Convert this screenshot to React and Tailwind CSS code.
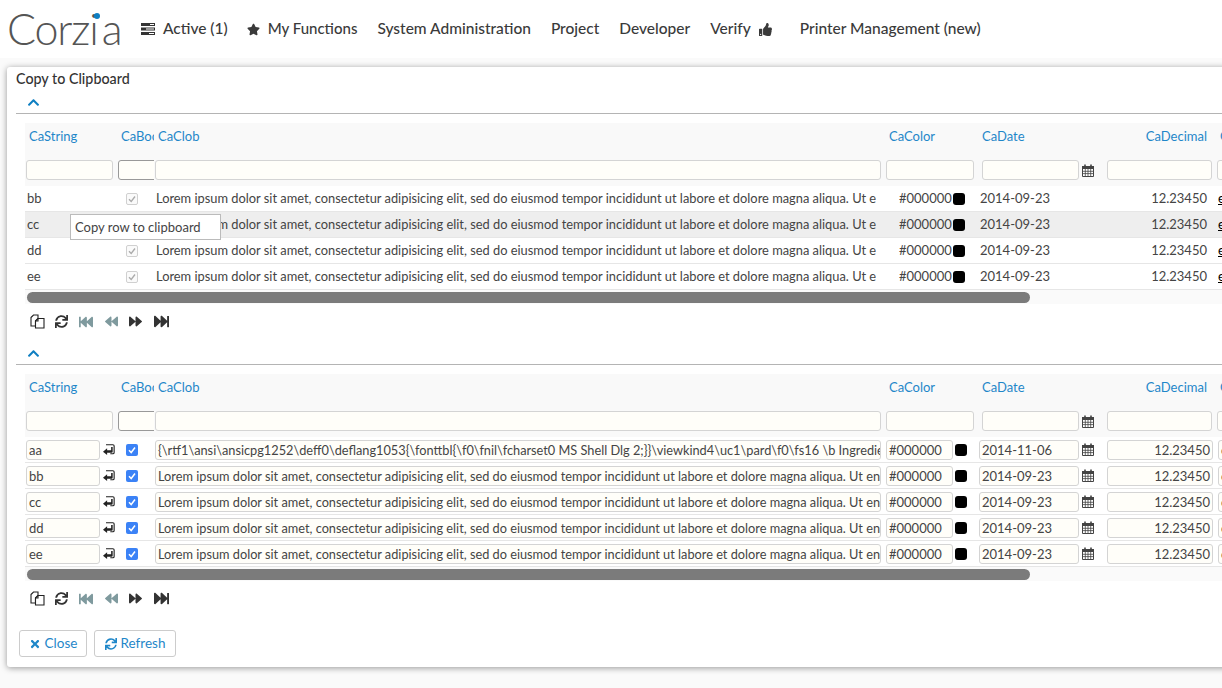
import {
    FaStar, FaThumbsUp, FaTimes, FaSync, FaFastBackward, FaFastForward, FaBackward, FaForward, FaChevronUp,
} from "react-icons/fa";

const LOREM = "Lorem ipsum dolor sit amet, consectetur adipisicing elit, sed do eiusmod tempor incididunt ut labore et dolore magna aliqua. Ut enim ad";
const RTF = "{\\rtf1\\ansi\\ansicpg1252\\deff0\\deflang1053{\\fonttbl{\\f0\\fnil\\fcharset0 MS Shell Dlg 2;}}\\viewkind4\\uc1\\pard\\f0\\fs16 \\b Ingredients";
const COLS = "grid grid-cols-[90px_39px_730px_95px_125px_111px_60px]";
const INPUT = "h-[20px] bg-[#fffef9] border border-[#d4d4d4] rounded-[3px] text-[13px] text-[#444] leading-[18px] overflow-hidden whitespace-nowrap";

function TasksIcon() {
    return (
        <svg width="14" height="12" viewBox="0 0 14 12" className="text-[#333]">
            <rect x="0" y="0" width="14" height="3" fill="currentColor" />
            <rect x="0" y="4.5" width="14" height="3" fill="currentColor" />
            <rect x="0" y="9" width="14" height="3" fill="currentColor" />
            <rect x="9" y="1" width="4" height="1" fill="#fff" />
            <rect x="5" y="5.5" width="8" height="1" fill="#fff" />
            <rect x="8" y="10" width="5" height="1" fill="#fff" />
        </svg>
    );
}

function CalendarIcon() {
    return (
        <svg width="12" height="13" viewBox="0 0 12 13" className="shrink-0 text-[#444]">
            <path d="M.5 2.5h11v10H.5z" fill="#fff" stroke="currentColor" />
            <path d="M0 2h12v3H0z" fill="currentColor" />
            <path d="M3 0.5v3M9 0.5v3" stroke="currentColor" strokeWidth="1.6" />
            <path d="M3.3 5v7M6 5v7M8.7 5v7M1 7.3h10M1 9.6h10" stroke="currentColor" strokeWidth=".8" />
        </svg>
    );
}

function CopyIcon() {
    return (
        <svg width="15" height="15" viewBox="0 0 15 15" fill="none" stroke="#222" strokeWidth="1.1">
            <path d="M1 3.5 3.500 1H8v3.500L5.500 7v5H1z" />
            <path d="M5.500 7 8 4.500h6V14H5.500z" fill="#fff" />
            <path d="M8 4.500V7H5.500" />
        </svg>
    );
}

function RowCopyIcon() {
    return (
        <svg width="14" height="13" viewBox="0 0 14 13" fill="none">
            <path d="M3.500 1h8a1.500 1.500 0 0 1 1.500 1.500v7.500a1.500 1.500 0 0 1-1.500 1.500H8.500" stroke="#222" strokeWidth="1.300" />
            <path d="M0 9 4.800 5v2.500h4.700V3.500h1.800V9a1.300 1.300 0 0 1-1.300 1.300H4.800V13z" fill="#222" />
        </svg>
    );
}

function Check({ disabled }) {
    return disabled ? (
        <span className="w-[12px] h-[12px] rounded-[2px] bg-[#fafafa] border border-[#d0d0d0] flex items-center justify-center">
            <svg width="8" height="8" viewBox="0 0 8 8"><path d="M1 4.200 3.200 6.500 7 1.500" fill="none" stroke="#aaa" strokeWidth="1.300" /></svg>
        </span>
    ) : (
        <span className="w-[12px] h-[12px] rounded-[2px] bg-[#3b82f6] flex items-center justify-center">
            <svg width="8" height="8" viewBox="0 0 8 8"><path d="M1 4.200 3.200 6.500 7 1.500" fill="none" stroke="#fff" strokeWidth="1.500" /></svg>
        </span>
    );
}

function Swatch() {
    return <span className="w-[12px] h-[12px] rounded-[3px] bg-black shrink-0" />;
}

function Chevron() {
    return (
        <div className="h-[21px] pl-[11px] pb-[2px] flex items-center border-b border-[#b4b4b4] text-[#0f7fc2]">
            <FaChevronUp size={13} />
        </div>
    );
}

function HeaderRows() {
    const labelClass = "text-[13px] text-[#1f87c9] whitespace-nowrap overflow-hidden leading-[16px]";
    return (
        <div className="bg-[#f9f9f9] h-[63px] mt-[9px] ml-[9px]">
            <div className={`${COLS} h-[25px] mb-[12px] items-center`}>
                <div className={`${labelClass} pl-[4px]`}>CaString</div>
                <div className={`${labelClass} pl-[6px] w-[39px]`}>CaBoolean</div>
                <div className={`${labelClass} pl-[4px]`}>CaClob</div>
                <div className={`${labelClass} pl-[5px]`}>CaColor</div>
                <div className={`${labelClass} pl-[3px]`}>CaDate</div>
                <div className={`${labelClass} pr-[8px] text-right`}>CaDecimal</div>
                <div className={`${labelClass} pl-[5px]`}>CaEnum</div>
            </div>
            <div className={`${COLS} h-[20px]`}>
                <div className="pl-[1px]"><div className={`${INPUT} w-[87px]`} /></div>
                <div className="pl-[3px] overflow-hidden"><div className="h-[20px] w-[50px] bg-[#fffef9] border border-[#999] rounded-[3px]" /></div>
                <div className="pl-[1px]"><div className={`${INPUT} w-[726px]`} /></div>
                <div className="pl-[2px]"><div className={`${INPUT} w-[88px]`} /></div>
                <div className="pl-[3px] flex items-center gap-[3px]"><div className={`${INPUT} w-[97px]`} /><CalendarIcon /></div>
                <div className="pl-[3px]"><div className={`${INPUT} w-[105px]`} /></div>
                <div className="pl-[2px]"><div className={`${INPUT} w-[60px]`} /></div>
            </div>
        </div>
    );
}

function ReadRow({ name, hover }) {
    return (
        <div className={`${COLS} h-[26px] items-center border-b border-[#e6e6e6] text-[13px] text-[#444] ml-[9px] ${hover ? "bg-[#eeeeee]" : "bg-white"}`}>
            <div className="pl-[2px]">{name}</div>
            <div className="pl-[11px]"><Check disabled /></div>
            <div className="ml-[2px] w-[720px] overflow-hidden whitespace-nowrap text-[12.85px]">{LOREM}</div>
            <div className="pl-[15px] flex items-center gap-[1px]"><span>#000000</span><Swatch /></div>
            <div className="pl-[1px]">2014-09-23</div>
            <div className="pr-[8px] text-right">12.23450</div>
            <div className="pl-[3px] underline text-black">en</div>
        </div>
    );
}

function EditRow({ name, text, date }) {
    return (
        <div className={`${COLS} h-[26px] items-center border-b border-[#e6e6e6] bg-white ml-[9px]`}>
            <div className="pl-[1px] flex items-center gap-[3px]">
                <div className={`${INPUT} w-[74px] pl-[2px] shrink-0`}>{name}</div>
                <RowCopyIcon />
            </div>
            <div className="pl-[11px]"><Check /></div>
            <div className="pl-[1px]"><div className={`${INPUT} w-[726px] pl-[2px]`}><span className="text-[12.75px]">{text}</span></div></div>
            <div className="pl-[2px] flex items-center gap-[2px]">
                <div className={`${INPUT} w-[67px] pl-[2px] shrink-0`}>#000000</div>
                <Swatch />
            </div>
            <div className="flex items-center gap-[3px]">
                <div className={`${INPUT} w-[100px] pl-[2px] shrink-0`}>{date}</div>
                <CalendarIcon />
            </div>
            <div className="pl-[3px]"><div className={`${INPUT} w-[106px] pr-[2px] text-right`}>12.23450</div></div>
            <div className="pl-[3px]"><div className={`${INPUT} w-[60px] pl-[2px]`}>en</div></div>
        </div>
    );
}

function ScrollBar() {
    return (
        <div className="h-[14px] ml-[9px] bg-[#fafafa] pt-[2px] pl-[2px]">
            <div className="h-[11px] w-[1003px] rounded-full bg-[#7b7b7b]" />
        </div>
    );
}

function Pager() {
    return (
        <div className="flex items-center h-[35px] pl-[14px] text-[#333]">
            <CopyIcon />
            <span className="ml-[10px]"><FaSync size={13} /></span>
            <span className="ml-[11px] text-[#7f9a9e]"><FaFastBackward size={14} /></span>
            <span className="ml-[12px] text-[#7f9a9e]"><FaBackward size={13} /></span>
            <span className="ml-[11px]"><FaForward size={13} /></span>
            <span className="ml-[12px]"><FaFastForward size={15} /></span>
        </div>
    );
}

export default function App() {
    const menu = ["System Administration", "Project", "Developer"];
    const editRows = [
        { name: "aa", text: RTF, date: "2014-11-06" },
        { name: "bb", text: LOREM, date: "2014-09-23" },
        { name: "cc", text: LOREM, date: "2014-09-23" },
        { name: "dd", text: LOREM, date: "2014-09-23" },
        { name: "ee", text: LOREM, date: "2014-09-23" },
    ];

    return (
        <div className="h-screen overflow-hidden bg-[#fafafa] font-['Lato','Liberation_Sans',sans-serif]">
            <header className="h-[58px] bg-white flex items-center text-[15.5px] font-medium text-[#3a3a3a]">
                <div className="relative ml-[7px] w-[134px] text-[43px] font-light leading-none text-[#555] -mt-[1px]">
                    <span className="tracking-[-1.2px]">Corz</span>
                    <span className="mr-[3px]">i</span>a
                    <span className="absolute left-[87px] top-[6px] w-[6px] h-[6px] rounded-full bg-[#0f7fc2]" />
                </div>
                <div className="flex items-center gap-[8px]"><TasksIcon /><span>Active (1)</span></div>
                <div className="flex items-center gap-[8px] ml-[19px]"><FaStar size={13} /><span className="text-[15px] mb-[1px]">My Functions</span></div>
                {menu.map(item => <span key={item} className="ml-[20px]">{item}</span>)}
                <div className="flex items-center gap-[8px] ml-[20px]"><span>Verify</span><FaThumbsUp size={13} /></div>
                <span className="ml-[28px]">Printer Management (new)</span>
            </header>

            <main className="mt-[9px] ml-[7px] w-[1260px] h-[600px] bg-white rounded-[3px] shadow-[0_1px_6px_rgba(0,0,0,0.4)] pl-[9px]">
                <h1 className="h-[26px] pt-[3px] text-[14.3px] font-medium text-[#333] leading-[18px]">Copy to Clipboard</h1>
                <Chevron />
                <HeaderRows />
                <div className="relative">
                    {["bb", "cc", "dd", "ee"].map(name => <ReadRow key={name} name={name} hover={name === "cc"} />)}
                    <div className="absolute left-[54px] top-[28px] w-[151px] h-[26px] bg-white border border-[#bbb] pl-[4px] text-[13px] leading-[24px] text-[#444]">
                        Copy row to clipboard
                    </div>
                </div>
                <ScrollBar />
                <Pager />
                <div className="mt-[5px]"><Chevron /></div>
                <HeaderRows />
                <div>
                    {editRows.map(row => <EditRow key={row.name} {...row} />)}
                </div>
                <ScrollBar />
                <Pager />
                <div className="flex gap-[7px] mt-[14px] pl-[3px] text-[13.5px] text-[#1f87c9]">
                    <button className="h-[27px] w-[68px] border border-[#ccc] rounded-[3px] bg-white flex items-center justify-center gap-[4px]">
                        <FaTimes size={12} /><span>Close</span>
                    </button>
                    <button className="h-[27px] w-[82px] border border-[#ccc] rounded-[3px] bg-white flex items-center justify-center gap-[4px]">
                        <FaSync size={12} /><span>Refresh</span>
                    </button>
                </div>
            </main>
        </div>
    );
}
